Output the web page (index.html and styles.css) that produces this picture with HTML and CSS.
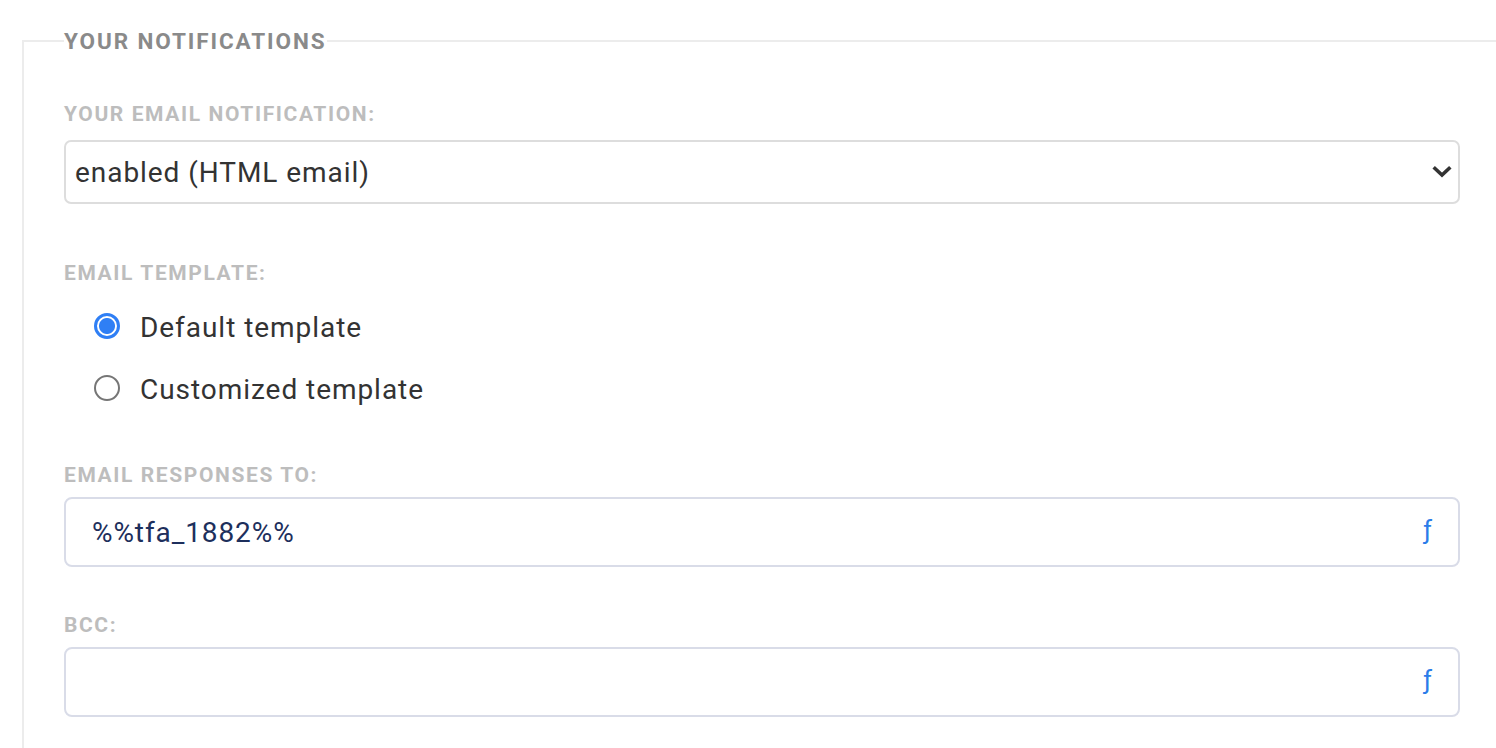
FILE: index.html
```html
<!DOCTYPE html>
<html lang="en">
<head>
<meta charset="utf-8">
<title>Your notifications</title>
<link rel="stylesheet" href="styles.css">
</head>
<body>
<form class="form">
  <fieldset class="section">
    <legend class="section-title">YOUR NOTIFICATIONS</legend>

    <div class="group group-select">
      <label class="field-label" for="notif">YOUR EMAIL NOTIFICATION:</label>
      <div class="select-wrap">
        <select id="notif" class="select">
          <option>enabled (HTML email)</option>
          <option>enabled (text email)</option>
          <option>disabled</option>
        </select>
        <svg class="chevron" width="20" height="14" viewBox="0 0 20 14" aria-hidden="true">
          <path d="M3 3.5 L10 10 L17 3.5" fill="none" stroke="#333" stroke-width="3.6" stroke-linecap="square" stroke-linejoin="miter"/>
        </svg>
      </div>
    </div>

    <div class="group group-radios">
      <div class="field-label">EMAIL TEMPLATE:</div>
      <label class="radio-row">
        <input type="radio" name="tpl" class="radio" checked>
        <span class="radio-text">Default template</span>
      </label>
      <label class="radio-row">
        <input type="radio" name="tpl" class="radio">
        <span class="radio-text">Customized template</span>
      </label>
    </div>

    <div class="group group-input">
      <label class="field-label" for="resp">EMAIL RESPONSES TO:</label>
      <div class="input-wrap">
        <input id="resp" class="input" type="text" value="%%tfa_1882%%">
        <span class="fx">ƒ</span>
      </div>
    </div>

    <div class="group group-input2">
      <label class="field-label" for="bcc">BCC:</label>
      <div class="input-wrap">
        <input id="bcc" class="input" type="text" value="">
        <span class="fx">ƒ</span>
      </div>
    </div>
  </fieldset>
</form>
</body>
</html>
```

FILE: styles.css
```css
html, body {
  margin: 0;
  padding: 0;
  background: #ffffff;
}

body {
  font-family: Roboto, "Liberation Sans", Arial, sans-serif;
  color: #333333;
  overflow: hidden;
}

.form {
  margin: 0;
}

.section {
  margin: 27px -20px 0 22px;
  padding: 0 36px 40px 40px;
  border: 2px solid #ececec;
  border-right: none;
  min-height: 760px;
  min-width: 0;
}

.section-title {
  padding: 0;
  margin: 0;
  font-size: 22.5px;
  line-height: 28px;
  font-weight: 700;
  letter-spacing: 1.9px;
  color: #8a8a8a;
}

.field-label {
  display: block;
  font-size: 21px;
  line-height: 24px;
  font-weight: 700;
  color: #bdbdbd;
  letter-spacing: 1.6px;
}

.group-select {
  padding-top: 47px;
}

.group-select .field-label {
  margin-bottom: 14px;
}

.select-wrap {
  position: relative;
  width: 1396px;
}

.select {
  display: block;
  width: 100%;
  height: 64px;
  box-sizing: border-box;
  -webkit-appearance: none;
  appearance: none;
  background: #ffffff;
  border: 2px solid #dddddd;
  border-radius: 7px;
  padding: 0 40px 0 9px;
  font-family: Roboto, "Liberation Sans", Arial, sans-serif;
  font-size: 28px;
  letter-spacing: 0.95px;
  color: #333333;
  outline: none;
}

.chevron {
  position: absolute;
  right: 8px;
  top: 25px;
  pointer-events: none;
}

.group-radios {
  margin-top: 57px;
}

.group-radios .field-label {
  margin-bottom: 10px;
}

.radio-row {
  display: flex;
  align-items: center;
  height: 62px;
  padding-left: 30px;
  cursor: pointer;
}

.radio {
  -webkit-appearance: none;
  appearance: none;
  margin: 0 20px 0 0;
  width: 26px;
  height: 26px;
  box-sizing: border-box;
  border: 2px solid #767676;
  border-radius: 50%;
  background: #ffffff;
  flex: none;
}

.radio:checked {
  border: 3px solid #2f7ff5;
  background: radial-gradient(circle, #2f7ff5 0 7.5px, #ffffff 8.5px);
}

.radio-text {
  font-size: 28px;
  line-height: 34px;
  letter-spacing: 0.95px;
  color: #333333;
  padding-top: 4px;
}

.group-input {
  margin-top: 44px;
}

.group-input .field-label,
.group-input2 .field-label {
  margin-bottom: 10px;
}

.group-input2 {
  margin-top: 46px;
}

.input-wrap {
  position: relative;
  width: 1396px;
}

.input {
  display: block;
  width: 100%;
  height: 70px;
  box-sizing: border-box;
  border: 2px solid #d9dce8;
  border-radius: 8px;
  padding: 0 60px 0 26px;
  font-family: Roboto, "Liberation Sans", Arial, sans-serif;
  font-size: 28px;
  letter-spacing: 0.9px;
  color: #1d2f5c;
  background: #ffffff;
  outline: none;
}

.fx {
  position: absolute;
  right: 28px;
  top: 18px;
  font-size: 26px;
  line-height: 30px;
  color: #2b7de9;
  pointer-events: none;
}
```
